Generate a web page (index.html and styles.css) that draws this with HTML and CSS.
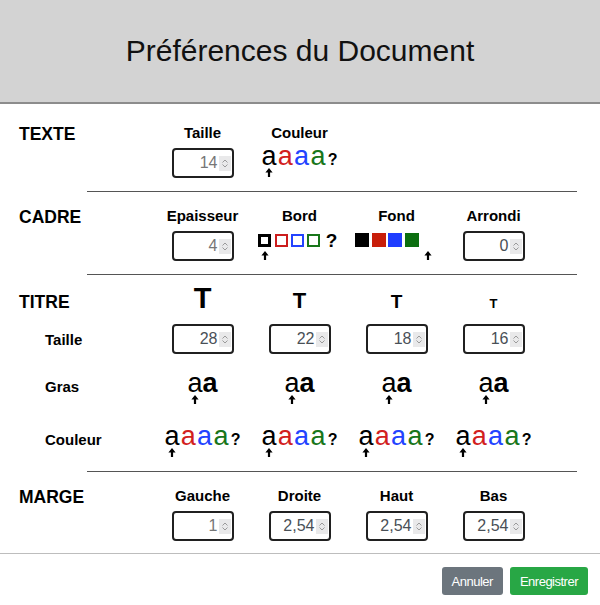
FILE: index.html
```html
<!DOCTYPE html>
<html lang="fr">
<head>
<meta charset="utf-8">
<title>Préférences du Document</title>
<link rel="stylesheet" href="styles.css">
</head>
<body>
<header class="head"><h1>Préférences du Document</h1></header>

<main class="prefs">
  <!-- TEXTE -->
  <section class="sec">
    <div class="row row-head">
      <span class="sec-label">TEXTE</span>
      <span class="col-head">Taille</span>
      <span class="col-head">Couleur</span>
    </div>
    <div class="row row-ctrl">
      <span></span>
      <label class="num"><input class="dim" type="text" value="14"><span class="spin"><svg viewBox="0 0 12 15"><path d="M3.5 6.5L6 4l2.5 2.5M3.5 8.5L6 11l2.5-2.5"/></svg></span></label>
      <div class="pick">
        <span class="sw"><span class="g c-k">a</span><svg class="ar" viewBox="0 0 8 9"><path d="M4 0l3.6 4.6H5.1V9H2.9V4.6H.4z"/></svg></span>
        <span class="sw"><span class="g c-r">a</span></span>
        <span class="sw"><span class="g c-b">a</span></span>
        <span class="sw"><span class="g c-g">a</span></span>
        <span class="sw q"><span class="g">?</span></span>
      </div>
    </div>
  </section>
  <hr class="rule">

  <!-- CADRE -->
  <section class="sec">
    <div class="row row-head">
      <span class="sec-label">CADRE</span>
      <span class="col-head">Epaisseur</span>
      <span class="col-head">Bord</span>
      <span class="col-head">Fond</span>
      <span class="col-head">Arrondi</span>
    </div>
    <div class="row row-ctrl">
      <span></span>
      <label class="num"><input class="dim" type="text" value="4"><span class="spin"><svg viewBox="0 0 12 15"><path d="M3.5 6.5L6 4l2.5 2.5M3.5 8.5L6 11l2.5-2.5"/></svg></span></label>
      <div class="pick pick-box">
        <span class="sw"><span class="box line b-k"></span><svg class="ar" viewBox="0 0 8 9"><path d="M4 0l3.6 4.6H5.1V9H2.9V4.6H.4z"/></svg></span>
        <span class="sw"><span class="box line b-r"></span></span>
        <span class="sw"><span class="box line b-b"></span></span>
        <span class="sw"><span class="box line b-g"></span></span>
        <span class="sw q q-lg"><span class="g">?</span></span>
      </div>
      <div class="pick pick-box pick-fill">
        <span class="sw"><span class="box fill f-k"></span></span>
        <span class="sw"><span class="box fill f-r"></span></span>
        <span class="sw"><span class="box fill f-b"></span></span>
        <span class="sw"><span class="box fill f-g"></span></span>
        <span class="sw"><span class="box fill f-none"></span><svg class="ar" viewBox="0 0 8 9"><path d="M4 0l3.6 4.6H5.1V9H2.9V4.6H.4z"/></svg></span>
      </div>
      <label class="num"><input type="text" value="0"><span class="spin"><svg viewBox="0 0 12 15"><path d="M3.5 6.5L6 4l2.5 2.5M3.5 8.5L6 11l2.5-2.5"/></svg></span></label>
    </div>
  </section>
  <hr class="rule">

  <!-- TITRE -->
  <section class="sec sec-titre">
    <div class="row row-t">
      <span class="sec-label">TITRE</span>
      <span class="t t1">T</span>
      <span class="t t2">T</span>
      <span class="t t3">T</span>
      <span class="t t4">T</span>
    </div>
    <div class="row row-size">
      <span class="sub-label">Taille</span>
      <label class="num"><input type="text" value="28"><span class="spin"><svg viewBox="0 0 12 15"><path d="M3.5 6.5L6 4l2.5 2.5M3.5 8.5L6 11l2.5-2.5"/></svg></span></label>
      <label class="num"><input type="text" value="22"><span class="spin"><svg viewBox="0 0 12 15"><path d="M3.5 6.5L6 4l2.5 2.5M3.5 8.5L6 11l2.5-2.5"/></svg></span></label>
      <label class="num"><input type="text" value="18"><span class="spin"><svg viewBox="0 0 12 15"><path d="M3.5 6.5L6 4l2.5 2.5M3.5 8.5L6 11l2.5-2.5"/></svg></span></label>
      <label class="num"><input type="text" value="16"><span class="spin"><svg viewBox="0 0 12 15"><path d="M3.5 6.5L6 4l2.5 2.5M3.5 8.5L6 11l2.5-2.5"/></svg></span></label>
    </div>
    <div class="row row-glyph">
      <span class="sub-label">Gras</span>
      <div class="pick pick-bold">
        <span class="sw"><span class="g c-k">a</span><svg class="ar" viewBox="0 0 8 9"><path d="M4 0l3.6 4.6H5.1V9H2.9V4.6H.4z"/></svg></span>
        <span class="sw"><span class="g c-k heavy">a</span></span>
      </div>
      <div class="pick pick-bold">
        <span class="sw"><span class="g c-k">a</span><svg class="ar" viewBox="0 0 8 9"><path d="M4 0l3.6 4.6H5.1V9H2.9V4.6H.4z"/></svg></span>
        <span class="sw"><span class="g c-k heavy">a</span></span>
      </div>
      <div class="pick pick-bold">
        <span class="sw"><span class="g c-k">a</span><svg class="ar" viewBox="0 0 8 9"><path d="M4 0l3.6 4.6H5.1V9H2.9V4.6H.4z"/></svg></span>
        <span class="sw"><span class="g c-k heavy">a</span></span>
      </div>
      <div class="pick pick-bold">
        <span class="sw"><span class="g c-k">a</span><svg class="ar" viewBox="0 0 8 9"><path d="M4 0l3.6 4.6H5.1V9H2.9V4.6H.4z"/></svg></span>
        <span class="sw"><span class="g c-k heavy">a</span></span>
      </div>
    </div>
    <div class="row row-glyph row-color">
      <span class="sub-label">Couleur</span>
      <div class="pick">
        <span class="sw"><span class="g c-k">a</span><svg class="ar" viewBox="0 0 8 9"><path d="M4 0l3.6 4.6H5.1V9H2.9V4.6H.4z"/></svg></span>
        <span class="sw"><span class="g c-r">a</span></span>
        <span class="sw"><span class="g c-b">a</span></span>
        <span class="sw"><span class="g c-g">a</span></span>
        <span class="sw q"><span class="g">?</span></span>
      </div>
      <div class="pick">
        <span class="sw"><span class="g c-k">a</span><svg class="ar" viewBox="0 0 8 9"><path d="M4 0l3.6 4.6H5.1V9H2.9V4.6H.4z"/></svg></span>
        <span class="sw"><span class="g c-r">a</span></span>
        <span class="sw"><span class="g c-b">a</span></span>
        <span class="sw"><span class="g c-g">a</span></span>
        <span class="sw q"><span class="g">?</span></span>
      </div>
      <div class="pick">
        <span class="sw"><span class="g c-k">a</span><svg class="ar" viewBox="0 0 8 9"><path d="M4 0l3.6 4.6H5.1V9H2.9V4.6H.4z"/></svg></span>
        <span class="sw"><span class="g c-r">a</span></span>
        <span class="sw"><span class="g c-b">a</span></span>
        <span class="sw"><span class="g c-g">a</span></span>
        <span class="sw q"><span class="g">?</span></span>
      </div>
      <div class="pick">
        <span class="sw"><span class="g c-k">a</span><svg class="ar" viewBox="0 0 8 9"><path d="M4 0l3.6 4.6H5.1V9H2.9V4.6H.4z"/></svg></span>
        <span class="sw"><span class="g c-r">a</span></span>
        <span class="sw"><span class="g c-b">a</span></span>
        <span class="sw"><span class="g c-g">a</span></span>
        <span class="sw q"><span class="g">?</span></span>
      </div>
    </div>
  </section>
  <hr class="rule">

  <!-- MARGE -->
  <section class="sec">
    <div class="row row-head">
      <span class="sec-label">MARGE</span>
      <span class="col-head">Gauche</span>
      <span class="col-head">Droite</span>
      <span class="col-head">Haut</span>
      <span class="col-head">Bas</span>
    </div>
    <div class="row row-ctrl">
      <span></span>
      <label class="num"><input class="dim" type="text" value="1"><span class="spin"><svg viewBox="0 0 12 15"><path d="M3.5 6.5L6 4l2.5 2.5M3.5 8.5L6 11l2.5-2.5"/></svg></span></label>
      <label class="num"><input type="text" value="2,54"><span class="spin"><svg viewBox="0 0 12 15"><path d="M3.5 6.5L6 4l2.5 2.5M3.5 8.5L6 11l2.5-2.5"/></svg></span></label>
      <label class="num"><input type="text" value="2,54"><span class="spin"><svg viewBox="0 0 12 15"><path d="M3.5 6.5L6 4l2.5 2.5M3.5 8.5L6 11l2.5-2.5"/></svg></span></label>
      <label class="num"><input type="text" value="2,54"><span class="spin"><svg viewBox="0 0 12 15"><path d="M3.5 6.5L6 4l2.5 2.5M3.5 8.5L6 11l2.5-2.5"/></svg></span></label>
    </div>
  </section>
</main>

<footer class="foot">
  <button class="btn btn-cancel" type="button">Annuler</button>
  <button class="btn btn-save" type="button">Enregistrer</button>
</footer>
</body>
</html>
```

FILE: styles.css
```css
* { box-sizing: border-box; }

body {
  margin: 0;
  background: #fff;
  color: #000;
  font-family: "Liberation Sans", Arial, sans-serif;
}

/* title bar */
.head {
  height: 104px;
  background: #d3d3d3;
  border-bottom: 2px solid #8c8c8c;
  display: flex;
  justify-content: center;
}
.head h1 {
  margin: 0;
  font-size: 30px;
  font-weight: 400;
  line-height: 102px;
  color: #111;
}

.prefs { padding-top: 5px; }

.sec { padding: 14px 0 13px; }
.sec:last-child { padding-bottom: 12px; }

.rule {
  height: 0;
  margin: 0 23px 0 87px;
  border: 0;
  border-top: 1px solid #555;
}

/* label column + four value columns */
.row {
  display: grid;
  grid-template-columns: 154px repeat(4, 97px);
  grid-auto-rows: 100%;
  align-items: center;
  justify-items: center;
}
.row > :first-child { justify-self: start; }

.row-head { height: 18px; }
.row-ctrl { height: 30px; margin-top: 7px; }

.sec-label {
  padding-left: 19px;
  font-size: 17.5px;
  font-weight: 700;
  line-height: 18px;
}
/* headings sit a little lower than the column titles */
.row-head .sec-label { margin: 2px 0 -2px; }
.col-head {
  margin: 1px 0 -1px;
  font-size: 15px;
  font-weight: 700;
  line-height: 18px;
}
.sub-label {
  padding-left: 45px;
  font-size: 15px;
  font-weight: 700;
}

/* TITRE block */
.sec-titre { padding: 9px 0 11px; }
.row-t { height: 30px; align-items: baseline; }
.t { font-weight: 700; line-height: 1; }
.t1 { font-size: 29px; }
.t2 { font-size: 22px; }
.t3 { font-size: 19px; }
.t4 { font-size: 13px; }
.row-size { height: 30px; margin-top: 10px; }
.row-glyph { height: 33px; margin-top: 20px; align-items: baseline; }

/* number field with stepper */
.num {
  display: flex;
  align-items: center;
  width: 62px;
  height: 30px;
  padding: 0 1px 0 3px;
  border: 2px solid #202020;
  border-radius: 4px;
  background: #fff;
}
.num input {
  flex: 1;
  min-width: 0;
  height: 100%;
  padding: 0 1px 0 0;
  border: 0;
  outline: 0;
  background: transparent;
  text-align: right;
  font: 16px "Liberation Sans", Arial, sans-serif;
  color: #495057;
}
.num input.dim { color: #767676; }
.spin {
  flex: none;
  width: 12px;
  height: 15px;
  background: #e9e9ea;
}
.spin svg {
  display: block;
  width: 12px;
  height: 15px;
  fill: none;
  stroke: #9a9a9a;
  stroke-width: 1;
}

/* swatch pickers */
.pick {
  display: flex;
  align-items: baseline;
  padding-bottom: 3px;
}
.sw {
  display: flex;
  flex-direction: column;
  align-items: center;
  margin-right: 1.3px;
}
.sw:last-child { margin-right: 0; }
.g {
  font-size: 27px;
  line-height: 19px;
}
.heavy { font-weight: 700; }
.pick-bold .sw { margin-right: 0; }

.q { margin-left: 1px; }
.q .g {
  font-size: 16px;
  font-weight: 700;
}
.q-lg .g {
  font-size: 19px;
  line-height: 18px;
}

.ar {
  display: block;
  width: 8px;
  height: 9px;
  margin-top: 2px;
  fill: #000;
}

.c-k { color: #000; }
.c-r { color: #d21f1f; }
.c-b { color: #2343ff; }
.c-g { color: #18761a; }

.pick-box { padding-bottom: 0; }
.pick-box .sw { margin-right: 3.3px; }
.pick-box .ar { margin-top: 4px; }
.pick-box .q { margin-left: 2px; }

.box { display: block; }
.line {
  width: 13px;
  height: 13px;
  border: 2px solid;
}
.b-k { border: 3px solid #000; }
.b-r { border-color: #cc1d1d; }
.b-b { border-color: #2343ff; }
.b-g { border-color: #18761a; }

.pick-fill .sw { margin-right: 2.5px; }
.fill {
  width: 14px;
  height: 14px;
}
.f-k { background: #000; }
.f-r { background: #c81e0a; }
.f-b { background: #1f3dff; }
.f-g { background: #0b6e10; }
.f-none { background: transparent; }

/* action bar */
.foot {
  display: flex;
  justify-content: flex-end;
  gap: 7px;
  padding: 13px 12px 0;
  border-top: 1px solid #bdbdbd;
}
.btn {
  height: 28px;
  padding: 0 10px;
  border: 0;
  border-radius: 3px;
  color: #fff;
  font: 13px "Liberation Sans", Arial, sans-serif;
  letter-spacing: -0.5px;
  cursor: pointer;
}
.btn-cancel { background: #6c757d; }
.btn-save { background: #28a745; }
```
